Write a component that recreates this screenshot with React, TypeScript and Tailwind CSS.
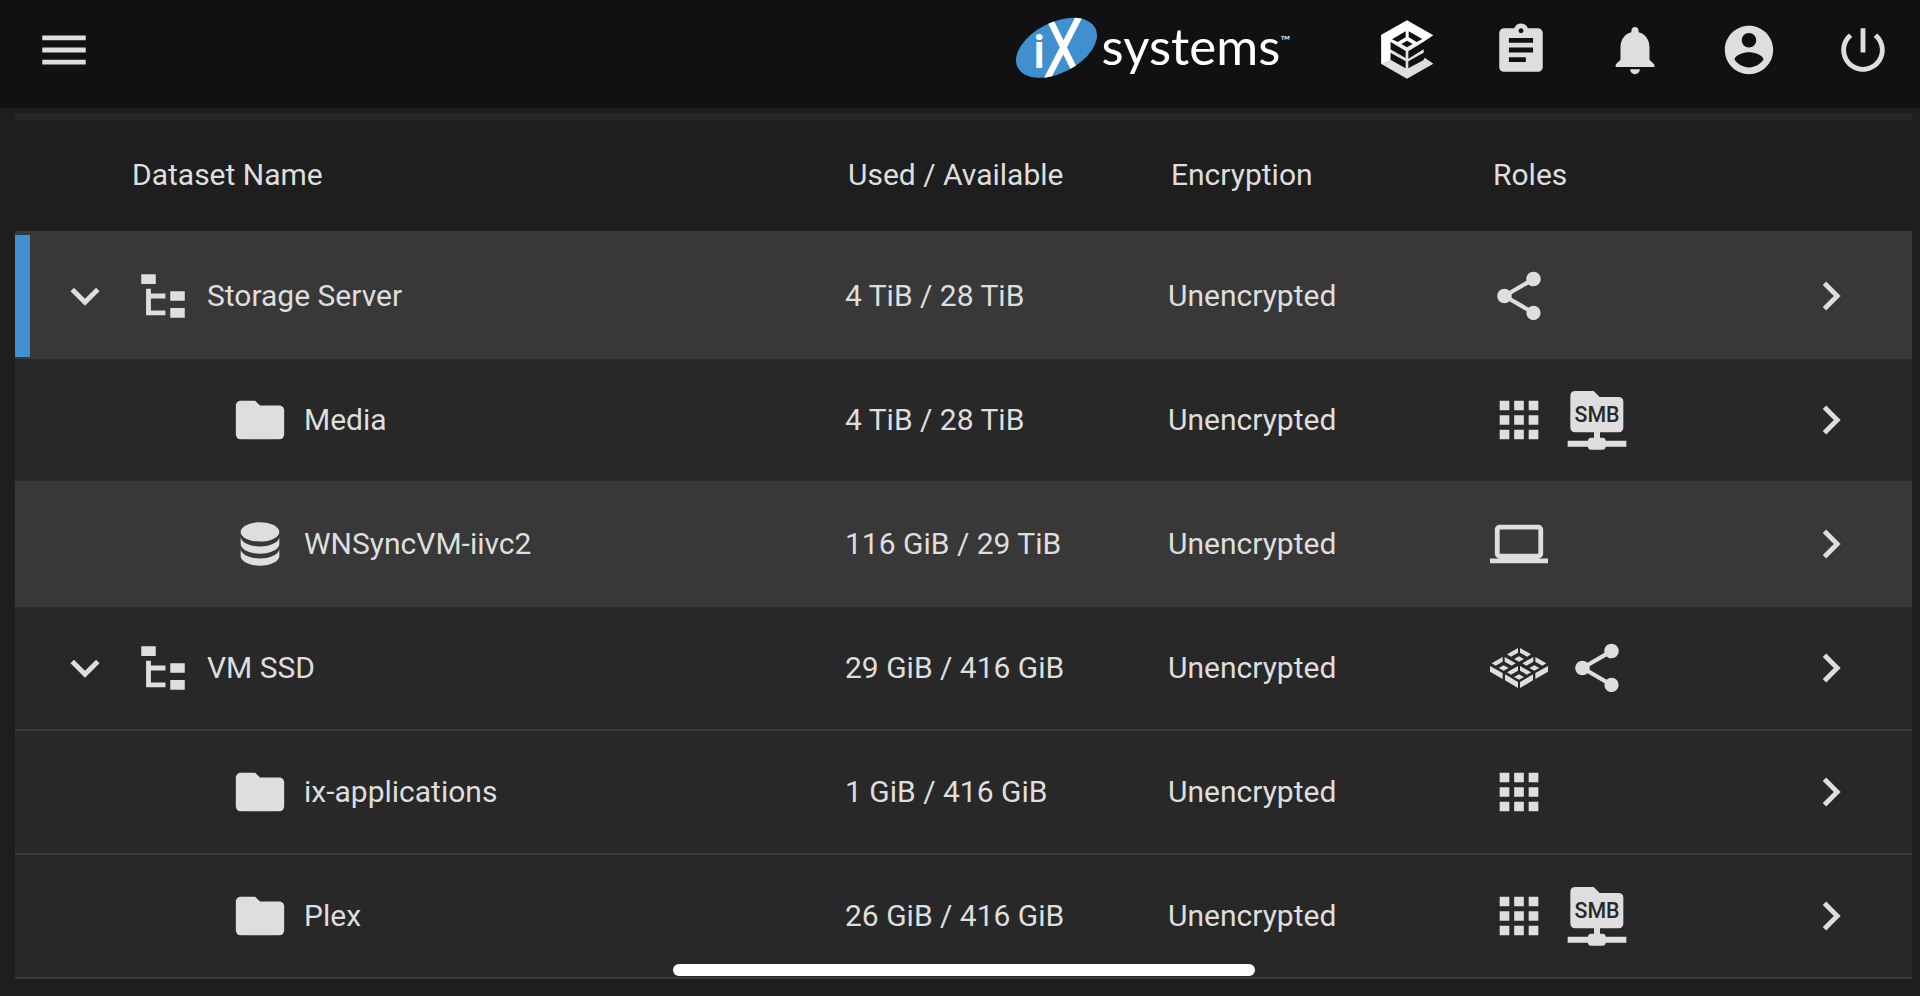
import React, { useState } from "react";

type IconProps = { d: string };

function Icon({ d }: IconProps) {
  return (
    <svg viewBox="0 0 24 24" className="size-[58px] shrink-0 fill-current" aria-hidden="true">
      <path d={d} />
    </svg>
  );
}

const paths = {
  menu: "M3 18h18v-2H3v2zm0-5h18v-2H3v2zm0-7v2h18V6H3z",
  clipboard:
    "M19 3h-4.18C14.4 1.84 13.3 1 12 1c-1.3 0-2.4.84-2.82 2H5c-1.1 0-2 .9-2 2v14c0 1.1.9 2 2 2h14c1.1 0 2-.9 2-2V5c0-1.1-.9-2-2-2zm-7 0c.55 0 1 .45 1 1s-.45 1-1 1-1-.45-1-1 .45-1 1-1zm2 14H7v-2h7v2zm3-4H7v-2h10v2zm0-4H7V7h10v2z",
  bell: "M12 22c1.1 0 2-.9 2-2h-4c0 1.1.89 2 2 2zm6-6v-5c0-3.07-1.64-5.64-4.5-6.32V4c0-.83-.67-1.5-1.5-1.5s-1.5.67-1.5 1.5v.68C7.63 5.36 6 7.92 6 11v5l-2 2v1h16v-1l-2-2z",
  account:
    "M12 2C6.48 2 2 6.48 2 12s4.48 10 10 10 10-4.48 10-10S17.52 2 12 2zm0 3c1.66 0 3 1.34 3 3s-1.34 3-3 3-3-1.34-3-3 1.34-3 3-3zm0 14.2c-2.5 0-4.71-1.28-6-3.22.03-1.99 4-3.08 6-3.08 1.99 0 5.97 1.09 6 3.08-1.29 1.94-3.5 3.22-6 3.22z",
  power:
    "M13 3h-2v10h2V3zm4.83 2.17l-1.42 1.42C17.99 7.86 19 9.81 19 12c0 3.87-3.13 7-7 7s-7-3.13-7-7c0-2.19 1.01-4.14 2.58-5.42L6.17 5.17C4.23 6.82 3 9.26 3 12c0 4.97 4.03 9 9 9s9-4.03 9-9c0-2.74-1.23-5.18-3.17-6.83z",
  chevronDown: "M7.41,8.58L12,13.17L16.59,8.58L18,10L12,16L6,10L7.41,8.58Z",
  chevronRight: "M8.59,16.58L13.17,12L8.59,7.41L10,6L16,12L10,18L8.59,16.58Z",
  tree: "M3,3H9V7H3V3M15,10H21V14H15V10M15,17H21V21H15V17M13,13H7V18H13V20H5V9H7V11H13V13Z",
  folder: "M10,4H4C2.89,4 2,4.89 2,6V18A2,2 0 0,0 4,20H20A2,2 0 0,0 22,18V8C22,6.89 21.1,6 20,6H12L10,4Z",
  database:
    "M12,3C7.58,3 4,4.79 4,7C4,9.21 7.58,11 12,11C16.42,11 20,9.21 20,7C20,4.79 16.42,3 12,3M4,9V12C4,14.21 7.58,16 12,16C16.42,16 20,14.21 20,12V9C20,11.21 16.42,13 12,13C7.58,13 4,11.21 4,9M4,14V17C4,19.21 7.58,21 12,21C16.42,21 20,19.21 20,17V14C20,16.21 16.42,18 12,18C7.58,18 4,16.21 4,14Z",
  share:
    "M18 16.08c-.76 0-1.44.3-1.96.77L8.91 12.7c.05-.23.09-.46.09-.7s-.04-.47-.09-.7l7.05-4.11c.54.5 1.25.81 2.04.81 1.66 0 3-1.34 3-3s-1.34-3-3-3-3 1.34-3 3c0 .24.04.47.09.7L8.04 9.81C7.5 9.31 6.79 9 6 9c-1.66 0-3 1.34-3 3s1.34 3 3 3c.79 0 1.5-.31 2.04-.81l7.12 4.16c-.05.21-.08.43-.08.65 0 1.61 1.31 2.92 2.92 2.92 1.61 0 2.92-1.31 2.92-2.92s-1.31-2.92-2.92-2.92z",
  apps: "M4 8h4V4H4v4zm6 12h4v-4h-4v4zm-6 0h4v-4H4v4zm0-6h4v-4H4v4zm6 0h4v-4h-4v4zm6-10v4h4V4h-4zm-6 4h4V4h-4v4zm6 6h4v-4h-4v4zm0 6h4v-4h-4v4z",
  laptop:
    "M4,6H20V16H4M20,18A2,2 0 0,0 22,16V6C22,4.89 21.1,4 20,4H4C2.89,4 2,4.89 2,6V16A2,2 0 0,0 4,18H0V20H24V18H20Z",
};

function SmbIcon() {
  return (
    <svg viewBox="383 454 174 174" className="size-[58px] shrink-0 overflow-visible fill-current" role="img" aria-label="SMB share">
      <path d="M405 454H460L478 472H534Q549 472 549 487V563Q549 578 534 578H479V594H486Q496 594 496 603H558V621H496Q496 630 486 630H453Q443 630 443 621H382V603H443Q443 594 453 594H461V578H405Q390 578 390 563V469Q390 454 405 454Z" />
      <text x="470" y="547" textAnchor="middle" fontSize="64" className="fill-[#282828] font-medium">
        SMB
      </text>
    </svg>
  );
}

const cellOffsets = ["translate(237 475)", "translate(191 502)", "translate(283 502)", "translate(237 529)"];

function TrueNasIcon() {
  return (
    <svg viewBox="150 448 174 174" className="size-[58px] shrink-0 fill-current" role="img" aria-label="System dataset">
      {cellOffsets.map((t) => (
        <path key={t} transform={t} d="M-3 0L-36 19L-24 26L-3 14ZM3 0L36 19L24 26L3 14ZM0 25L15 33L0 41L-15 33Z" />
      ))}
      <path d="M150 529L188 550V568L150 546ZM195 554L234 577V595L195 572ZM324 529L286 550V568L324 546ZM279 554L240 577V595L279 572Z" />
    </svg>
  );
}

function CommandIcon() {
  return (
    <svg viewBox="114 62 174 174" className="size-[58px] shrink-0 overflow-visible" aria-hidden="true">
      <defs>
        <linearGradient id="shade" x1="0" y1="0" x2="0" y2="1">
          <stop offset="0.3" stopColor="#ffffff" />
          <stop offset="0.6" stopColor="#dedede" />
        </linearGradient>
      </defs>
      <path
        fill="url(#shade)"
        fillRule="evenodd"
        d="M201 60L280 105L251 124L205 153V175L251 147V157L205 183V204L250 180L254 172L280 190L201 235L124 191V103ZM197 93L156 117L173 125L197 111ZM206 93V111L230 125L247 116ZM201 121L184 131L201 141L218 131ZM151 124V147L197 173V152ZM151 157V178L197 204V183Z"
      />
      <path fill="#ffffff" d="M124 103L151 118V178L124 191Z" />
    </svg>
  );
}

function BrandLogo() {
  return (
    <a href="#" className="flex items-start pb-1 text-white" aria-label="iXsystems">
      <svg viewBox="0 0 84 64" className="h-16 w-[84px]" aria-hidden="true">
        <defs>
          <clipPath id="oval">
            <ellipse cx="42.5" cy="31.8" rx="43.6" ry="25.3" transform="rotate(-27 42.5 31.8)" />
          </clipPath>
        </defs>
        <g clipPath="url(#oval)">
          <rect width="84" height="64" fill="#4090d0" />
          <g stroke="#ffffff" strokeWidth="6.4">
            <path d="M33.500 -1L62.500 58" />
            <path d="M66 -1L32 65" />
          </g>
        </g>
        <text x="25" y="52" textAnchor="middle" fontSize="48" className="fill-white font-medium">
          i
        </text>
      </svg>
      <span className="pl-1 font-['Lato',sans-serif] text-[51px] leading-[60px]">systems</span>
      <span className="pt-4 font-['Lato',sans-serif] text-[13px] leading-4">™</span>
    </a>
  );
}

type Role = "share" | "apps" | "smb" | "vm" | "system";

function RoleIcon({ role }: { role: Role }) {
  switch (role) {
    case "smb":
      return <SmbIcon />;
    case "system":
      return <TrueNasIcon />;
    case "vm":
      return <Icon d={paths.laptop} />;
    case "apps":
      return <Icon d={paths.apps} />;
    default:
      return <Icon d={paths.share} />;
  }
}

type Dataset = {
  name: string;
  kind: "root" | "folder" | "volume";
  used: string;
  roles: Role[];
  selected?: boolean;
  raised?: boolean;
};

const datasets: Dataset[] = [
  { name: "Storage Server", kind: "root", used: "4 TiB / 28 TiB", roles: ["share"], selected: true, raised: true },
  { name: "Media", kind: "folder", used: "4 TiB / 28 TiB", roles: ["apps", "smb"] },
  { name: "WNSyncVM-iivc2", kind: "volume", used: "116 GiB / 29 TiB", roles: ["vm"], raised: true },
  { name: "VM SSD", kind: "root", used: "29 GiB / 416 GiB", roles: ["system", "share"] },
  { name: "ix-applications", kind: "folder", used: "1 GiB / 416 GiB", roles: ["apps"] },
  { name: "Plex", kind: "folder", used: "26 GiB / 416 GiB", roles: ["apps", "smb"] },
];

const actions = [
  { label: "Tasks", d: paths.clipboard },
  { label: "Alerts", d: paths.bell },
  { label: "Account", d: paths.account },
  { label: "Power", d: paths.power },
];

export default function App() {
  const [closed, setClosed] = useState<string[]>([]);
  const toggle = (name: string) =>
    setClosed((c) => (c.includes(name) ? c.filter((n) => n !== name) : [...c, name]));

  let parent = "";
  const visible = datasets.filter((row) => {
    if (row.kind === "root") {
      parent = row.name;
      return true;
    }
    return !closed.includes(parent);
  });

  return (
    <div className="min-h-screen bg-[#1e1e1e] font-['Roboto',sans-serif] text-[30px] leading-9 text-[#dedede]">
      <header className="flex h-[108px] items-center justify-between bg-[#111111] pr-7 pb-2 pl-[35px]">
        <button type="button" aria-label="Menu">
          <Icon d={paths.menu} />
        </button>
        <div className="flex items-center gap-14">
          <div className="pr-8">
            <BrandLogo />
          </div>
          <button type="button" aria-label="TrueCommand">
            <CommandIcon />
          </button>
          {actions.map((a) => (
            <button key={a.label} type="button" aria-label={a.label}>
              <Icon d={a.d} />
            </button>
          ))}
        </div>
      </header>

      <main className="relative mr-2 ml-[15px] pt-[5px]">
        <div className="h-[7px] bg-[#282828]" />
        <table className="w-full table-fixed border-separate border-spacing-0 text-left">
          <colgroup>
            <col />
            <col className="w-[323px]" />
            <col className="w-[322px]" />
            <col className="w-[312px]" />
            <col className="w-[110px]" />
          </colgroup>
          <thead>
            <tr className="h-[115px] *:border-b-4 *:border-[#383838] *:pb-0.5 *:font-normal">
              <th className="pl-[117px]">Dataset Name</th>
              <th className="pl-[3px]">Used / Available</th>
              <th className="pl-[3px]">Encryption</th>
              <th className="pl-[3px]">Roles</th>
              <th aria-label="Details" />
            </tr>
          </thead>
          <tbody>
            {visible.map((row) => (
              <tr
                key={row.name}
                className={`h-[124px] *:border-b-2 *:border-[#383838] ${row.raised ? "bg-[#383838]" : "bg-[#282828]"}`}
              >
                <td>
                  <div className="flex h-[122px] items-center">
                    <div className={`h-full w-[15px] ${row.selected ? "bg-[#4090d0]" : ""}`} />
                    {row.kind === "root" ? (
                      <div className="flex items-center gap-5 pl-[26px]">
                        <button
                          type="button"
                          aria-label={`Toggle ${row.name}`}
                          aria-expanded={!closed.includes(row.name)}
                          onClick={() => toggle(row.name)}
                        >
                          <Icon d={paths.chevronDown} />
                        </button>
                        <div className="flex items-center gap-[15px]">
                          <Icon d={paths.tree} />
                          <span>{row.name}</span>
                        </div>
                      </div>
                    ) : (
                      <div className="flex items-center gap-[15px] pl-[201px]">
                        <Icon d={row.kind === "folder" ? paths.folder : paths.database} />
                        <span>{row.name}</span>
                      </div>
                    )}
                  </div>
                </td>
                <td>{row.used}</td>
                <td>Unencrypted</td>
                <td>
                  <div className="flex items-center gap-5">
                    {row.roles.map((r) => (
                      <RoleIcon key={r} role={r} />
                    ))}
                  </div>
                </td>
                <td>
                  <button type="button" className="block" aria-label={`Open ${row.name}`}>
                    <Icon d={paths.chevronRight} />
                  </button>
                </td>
              </tr>
            ))}
          </tbody>
        </table>
        <div className="absolute bottom-[3px] left-1/2 h-3 w-[582px] -translate-x-1/2 rounded-full bg-white" />
      </main>
    </div>
  );
}
